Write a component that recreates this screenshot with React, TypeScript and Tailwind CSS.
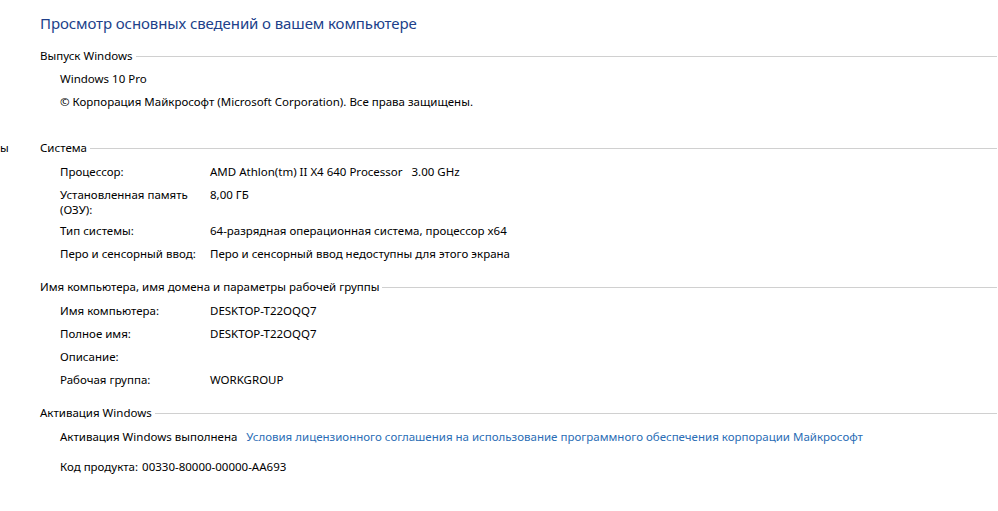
import type { ReactNode } from 'react'

const SYSTEM_ROWS: Array<{ label: ReactNode; value: string; tall?: boolean }> = [
  { label: 'Процессор:', value: 'AMD Athlon(tm) II X4 640 Processor\u00a0\u00a0\u00a03.00 GHz' },
  { label: <>Установленная память<br />(ОЗУ):</>, value: '8,00 ГБ', tall: true },
  { label: 'Тип системы:', value: '64-разрядная операционная система, процессор x64' },
  { label: 'Перо и сенсорный ввод:', value: 'Перо и сенсорный ввод недоступны для этого экрана' },
]

const NAME_ROWS = [
  { label: 'Имя компьютера:', value: 'DESKTOP-T22OQQ7' },
  { label: 'Полное имя:', value: 'DESKTOP-T22OQQ7' },
  { label: 'Описание:', value: '' },
  { label: 'Рабочая группа:', value: 'WORKGROUP' },
]

export default function App() {
  return (
    <div
      className="h-[511px] w-[998px] overflow-hidden bg-white text-[11.5px] leading-[15px] text-black"
      style={{ fontFamily: '"Noto Sans", "Open Sans", sans-serif' }}
    >
      <h1 className="pl-[40px] pt-[13px] text-[15px] leading-[20px] tracking-[-0.1px] text-[#203f8a]">
        Просмотр основных сведений о вашем компьютере
      </h1>

      <SectionHeader title="Выпуск Windows" className="mt-[15px]" />
      <div className="mt-[4px] pl-[60px]">
        <div className="py-[4px]">Windows 10 Pro</div>
        <div className="py-[4px]">© Корпорация Майкрософт (Microsoft Corporation). Все права защищены.</div>
      </div>

      <SectionHeader title="Система" className="mt-[27px]" edge="ы" />
      <div className="mt-[5px] pl-[60px]">
        {SYSTEM_ROWS.map((row, i) => (
          <InfoRow key={i} label={row.label} value={row.value} tall={row.tall} />
        ))}
      </div>

      <SectionHeader title="Имя компьютера, имя домена и параметры рабочей группы" className="mt-[14px]" />
      <div className="mt-[5px] pl-[60px]">
        {NAME_ROWS.map((row) => (
          <InfoRow key={row.label} label={row.label} value={row.value} />
        ))}
      </div>

      <SectionHeader title="Активация Windows" className="mt-[14px]" />
      <div className="mt-[5px] flex gap-[9px] py-[4px] pl-[60px]">
        <span>Активация Windows выполнена</span>
        <a href="#" className="text-[#2a6db5]">
          Условия лицензионного соглашения на использование программного обеспечения корпорации Майкрософт
        </a>
      </div>
      <div className="mt-[7px] flex gap-[4px] py-[4px] pl-[60px]">
        <span>Код продукта:</span>
        <span>00330-80000-00000-AA693</span>
      </div>
    </div>
  )
}

function SectionHeader({ title, className = '', edge }: { title: string; className?: string; edge?: string }) {
  return (
    <div className={`flex h-[15px] items-center pr-[1px] ${className}`}>
      <span className="w-[40px] shrink-0 overflow-hidden">{edge}</span>
      <span className="whitespace-nowrap">{title}</span>
      <span className="ml-[3px] h-px flex-1 translate-y-[1px] bg-[#d0d0d0]" />
    </div>
  )
}

function InfoRow({ label, value, tall }: { label: ReactNode; value: string; tall?: boolean }) {
  return (
    <div className={`flex pt-[4px] ${tall ? 'pb-[2px]' : 'pb-[4px]'}`}>
      <div className="w-[150px] shrink-0">{label}</div>
      <div className="whitespace-nowrap">{value}</div>
    </div>
  )
}
